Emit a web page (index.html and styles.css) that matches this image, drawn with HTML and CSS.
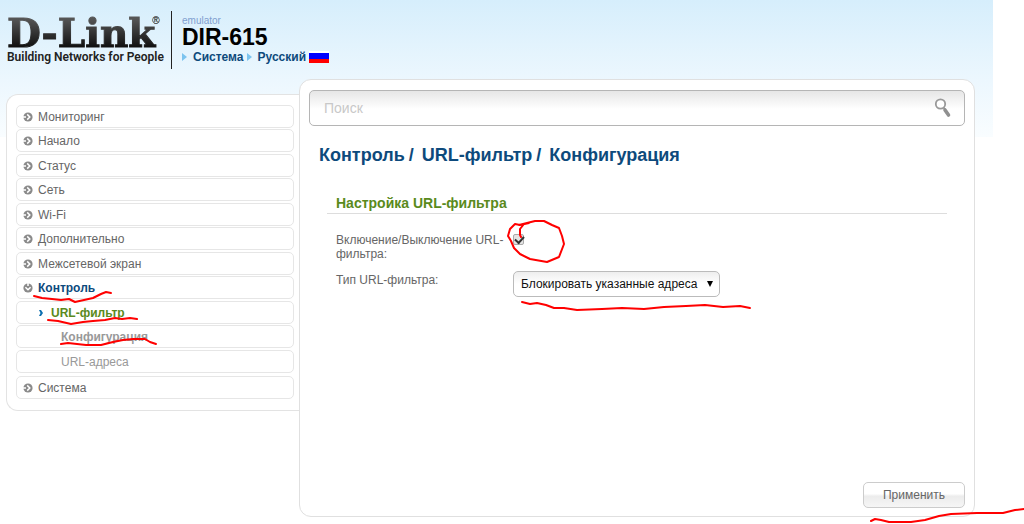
FILE: index.html
```html
<!DOCTYPE html>
<html lang="ru">
<head>
    <meta charset="UTF-8">
    <meta name="viewport" content="width=device-width, initial-scale=1.0">
    <title>D-Link DIR-615</title>
    <link rel="stylesheet" href="styles.css">
</head>
<body>
    <svg class="symbols" width="0" height="0" aria-hidden="true">
        <symbol id="bullet" viewBox="0 0 10 10">
            <circle cx="5" cy="5" r="4.6" fill="#8a8a8a"/>
            <path d="M0 5h3M4.200 2.400L6.800 5 4.200 7.600" fill="none" stroke="#fff" stroke-width="1.500"/>
        </symbol>
    </svg>

    <div class="page">
        <header class="header">
            <div class="logo">
                <div class="logo-name">D-Link<sup>®</sup></div>
                <div class="logo-slogan">Building Networks for People</div>
            </div>
            <div class="device">
                <div class="device-mode">emulator</div>
                <div class="device-name">DIR-615</div>
                <nav class="device-links">
                    <a href="#">Система</a>
                    <a href="#">Русский</a>
                    <span class="flag"></span>
                </nav>
            </div>
        </header>

        <div class="columns">
            <nav class="sidebar">
                <ul class="menu">
                    <li><a href="#"><svg class="icon"><use href="#bullet"/></svg>Мониторинг</a></li>
                    <li><a href="#"><svg class="icon"><use href="#bullet"/></svg>Начало</a></li>
                    <li><a href="#"><svg class="icon"><use href="#bullet"/></svg>Статус</a></li>
                    <li><a href="#"><svg class="icon"><use href="#bullet"/></svg>Сеть</a></li>
                    <li><a href="#"><svg class="icon"><use href="#bullet"/></svg>Wi-Fi</a></li>
                    <li><a href="#"><svg class="icon"><use href="#bullet"/></svg>Дополнительно</a></li>
                    <li><a href="#"><svg class="icon"><use href="#bullet"/></svg>Межсетевой экран</a></li>
                    <li class="open"><a href="#"><svg class="icon"><use href="#bullet"/></svg>Контроль</a></li>
                    <li class="sub"><a href="#"><svg class="arrow" viewBox="0 0 4 6"><path d="M0 0h2l2 3-2 3H0l1.500-3z" fill="#0b6fb0"/></svg>URL-фильтр</a></li>
                    <li class="leaf current"><a href="#">Конфигурация</a></li>
                    <li class="leaf last"><a href="#">URL-адреса</a></li>
                    <li><a href="#"><svg class="icon"><use href="#bullet"/></svg>Система</a></li>
                </ul>
            </nav>

            <main class="content">
                <div class="search">
                    <input type="text" placeholder="Поиск" aria-label="Поиск">
                    <svg class="search-icon" viewBox="0 0 18 20">
                        <circle cx="6.500" cy="6" r="4.700" fill="#fff" stroke="#999" stroke-width="1.800"/>
                        <path d="M9.500 9.500l1.500 2" stroke="#999" stroke-width="1.500"/>
                        <path d="M11 12l3.500 5" stroke="#909090" stroke-width="3.600" stroke-linecap="round"/>
                    </svg>
                </div>

                <h1>
                    <a href="#">Контроль</a><span>/</span>
                    <a href="#">URL-фильтр</a><span>/</span>
                    <a href="#">Конфигурация</a>
                </h1>

                <form class="settings">
                    <h2>Настройка URL-фильтра</h2>
                    <div class="row">
                        <label for="enable">Включение/Выключение URL-фильтра:</label>
                        <input type="checkbox" id="enable" checked>
                    </div>
                    <div class="row">
                        <label for="type">Тип URL-фильтра:</label>
                        <div class="select">
                            <select id="type">
                                <option>Блокировать указанные адреса</option>
                            </select>
                        </div>
                    </div>
                    <div class="actions">
                        <button type="submit">Применить</button>
                    </div>
                </form>
            </main>
        </div>
    </div>

    <!-- Пометки красным маркером -->
    <svg class="marks" width="1024" height="524" viewBox="0 0 1024 524" aria-hidden="true">
        <path d="M34 296l8 2 10 1 9 1 8-1 6 3 9-2 9-2 8-4 5-2 5 1"/>
        <path d="M48 320l10 1 13 3 12-2 10-1 12-1 10-2 7 1 8-1 7 1"/>
        <path d="M61 344l7-1 9 1 9 1 15 0 12-3 10-2 10-1 12 0 5 3 6 2"/>
        <path d="M521 237l-1-2 0-6 4-5 5-1-9 2-5-1-5 5-2 7 3 5 3 7 6 6 10 5 17 3 12-5 5-13-2-8-3-8-7-3-8-4-9 0-16 4"/>
        <path d="M522 302l8 2 7-1 9 2 8 3 10 0 13 2 25-1 20-1 22 1 20-2 22-1 19-1 18 2 17-1 10 2"/>
        <path d="M871 521l4-2 6 1 8 2h22l14-2 14-4 12-2 26-1 26 0 12-3 9-1"/>
    </svg>
</body>
</html>
```
FILE: styles.css
```css
* {
    margin: 0;
    padding: 0;
    box-sizing: border-box;
}

body {
    font-family: "Liberation Sans", Arial, sans-serif;
    font-size: 12px;
    color: #666;
    background: #fff;
}

a {
    color: inherit;
    text-decoration: none;
}

.symbols {
    position: absolute;
}

.page {
    margin-right: 31px;
    padding: 0 18px 8px 6px;
    background: linear-gradient(#d6eefc, #ecf7fe 80px, #f9fdff 137px) no-repeat;
    background-size: 100% 137px;
}

/* Шапка */
.header {
    display: flex;
    height: 79px;
    padding-top: 11px;
}

.logo {
    width: 166px;
    height: 58px;
    border-right: 1px solid #222;
    color: #222;
}

.logo-name {
    display: flex;
    height: 39px;
    padding-left: 1px;
    font: bold 39px/44px "DejaVu Serif", serif;
    white-space: nowrap;
    background: linear-gradient(#555 8px, #111 36px);
    -webkit-background-clip: text;
    background-clip: text;
    color: transparent;
    -webkit-text-stroke: 1px transparent;
}

.logo-name sup {
    margin-left: -3px;
    padding-top: 4px;
    font: 10px/12px "Liberation Sans", sans-serif;
    color: #444;
    -webkit-text-stroke: 0;
}

.logo-slogan {
    padding-left: 1px;
    font: 600 12px/14px Roboto, sans-serif;
    white-space: nowrap;
}

.device {
    padding: 4px 0 0 10px;
}

.device-mode {
    font-size: 10px;
    line-height: 11px;
    color: #7f9fd0;
}

.device-name {
    font-size: 23px;
    font-weight: bold;
    line-height: 23px;
    color: #000;
}

.device-links {
    display: flex;
    align-items: center;
    gap: 3px;
    line-height: 16px;
    font-weight: bold;
    color: #0d4a7c;
}

.device-links a {
    display: flex;
    align-items: center;
    gap: 6px;
}

.device-links a::before {
    content: "";
    border-left: 5px solid #7cc4ef;
    border-top: 4px solid transparent;
    border-bottom: 4px solid transparent;
}

.flag {
    width: 20px;
    height: 12px;
    background: linear-gradient(#fff 2px, #00f 2px, #00f 8px, #f00 8px);
}

.columns {
    display: flex;
    align-items: flex-start;
}

/* Меню */
.sidebar {
    flex: 0 0 293px;
    margin-top: 15px;
    padding: 10px 5px 9px 9px;
    border: 1px solid #e3e3e3;
    border-right: none;
    border-radius: 12px 0 0 12px;
    background: #fff;
}

.menu {
    list-style: none;
}

.menu li {
    margin-bottom: 1px;
    border: 1px solid #e6e6e6;
    border-radius: 5px;
    background: #fff;
}

.menu li:nth-child(even) {
    margin-bottom: 2px;
}

.menu a {
    display: flex;
    align-items: center;
    height: 21px;
    padding-top: 1px;
    padding-left: 6px;
}

.icon {
    width: 10px;
    height: 10px;
    margin-right: 5px;
}

.menu .open {
    font-weight: bold;
    color: #0d4a7c;
}

.open .icon {
    transform: rotate(90deg);
}

.menu .sub {
    font-weight: bold;
    color: #5a8a1c;
}

.sub a {
    padding-left: 22px;
}

.arrow {
    width: 4px;
    height: 6px;
    margin-right: 8px;
}

.menu .leaf {
    color: #999;
}

.leaf a {
    padding-left: 44px;
}

.menu .current {
    font-weight: bold;
}

.menu .last {
    margin-bottom: 3px;
}

/* Основная часть */
.content {
    flex: 1;
    padding: 10px 9px 8px;
    border: 1px solid #e0e0e0;
    border-radius: 12px;
    background: #fff;
}

.search {
    display: flex;
    align-items: center;
    height: 36px;
    padding: 0 12px 0 14px;
    border: 1px solid #b5b5b5;
    border-radius: 5px;
    background: linear-gradient(#e6e6e6, #fff 18px);
}

.search input {
    flex: 1;
    border: none;
    outline: none;
    background: none;
    font: 14px "Liberation Sans", Arial, sans-serif;
}

.search input::placeholder {
    color: #c8c8c8;
}

.search-icon {
    width: 18px;
    height: 20px;
}

h1 {
    display: flex;
    gap: 8px;
    padding: 18px 10px 0;
    font-size: 18px;
    line-height: 22px;
    color: #0d4a7c;
}

h1 span {
    margin-left: -4px;
}

.settings {
    padding: 28px 0 0 18px;
}

h2 {
    margin-right: 18px;
    padding: 0 0 1px 9px;
    border-bottom: 1px solid #ddd;
    font-size: 14px;
    line-height: 18px;
    color: #5a8a1c;
}

.row {
    display: flex;
    align-items: flex-start;
    padding: 12px 9px 0;
}

h2 + .row {
    padding-top: 19px;
}

.row label {
    width: 177px;
    line-height: 14px;
}

.row input {
    appearance: none;
    width: 11px;
    height: 11px;
    margin-top: 1px;
    border: 1px solid #aaa;
    border-radius: 2px;
    background: #e4e4e4;
}

.row input:checked::before {
    content: "";
    display: block;
    width: 7px;
    height: 4px;
    margin: 1px;
    border: solid #333;
    border-width: 0 0 2px 2px;
    transform: rotate(-48deg);
}

.select {
    display: flex;
    align-items: center;
    width: 207px;
    height: 26px;
    margin-top: -2px;
    padding-right: 6px;
    border: 1px solid #bbb;
    border-radius: 5px;
    background: linear-gradient(#eee, #fff 12px);
}

.select::after {
    content: "";
    border-top: 6px solid #000;
    border-left: 3px solid transparent;
    border-right: 3px solid transparent;
}

.select select {
    flex: 1;
    appearance: none;
    padding-left: 7px;
    border: none;
    outline: none;
    background: none;
    font: 12px "Liberation Sans", Arial, sans-serif;
    color: #111;
}

.actions {
    display: flex;
    justify-content: flex-end;
    padding-top: 185px;
}

button {
    width: 102px;
    height: 26px;
    border: 1px solid #ccc;
    border-radius: 5px;
    background: linear-gradient(#fff 45%, #ececec 55%, #f6f6f6);
    font: 12px "Liberation Sans", Arial, sans-serif;
    color: #666;
}

/* Пометки поверх страницы */
.marks {
    position: absolute;
    top: 0;
    left: 0;
    fill: none;
    stroke: #f00;
    stroke-width: 2;
    stroke-linecap: round;
    stroke-linejoin: round;
    pointer-events: none;
}
```
